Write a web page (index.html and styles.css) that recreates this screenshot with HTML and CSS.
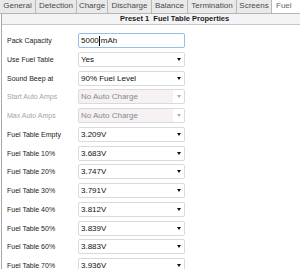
FILE: index.html
```html
<!DOCTYPE html>
<html>
<head>
<meta charset="utf-8">
<link rel="stylesheet" href="styles.css">
</head>
<body>
<div class="tabs">
  <div class="tab t-general">General</div>
  <div class="tab t-detection">Detection</div>
  <div class="tab t-charge">Charge</div>
  <div class="tab t-discharge">Discharge</div>
  <div class="tab t-balance">Balance</div>
  <div class="tab t-termination">Termination</div>
  <div class="tab t-screens">Screens</div>
  <div class="tab t-fuel active">Fuel</div>
</div>
<div class="panel">
  <div class="panel-head"><b>Preset 1</b>&nbsp;&nbsp;<b>Fuel Table Properties</b></div>
  <div class="form">
    <div class="row"><span class="label">Pack Capacity</span><div class="box input focus"><span>5000</span><span class="caret"></span><span>mAh</span></div></div>
    <div class="row"><span class="label">Use Fuel Table</span><div class="box select"><span class="val">Yes</span><span class="arrow"></span></div></div>
    <div class="row"><span class="label">Sound Beep at</span><div class="box select"><span class="val">90% Fuel Level</span><span class="arrow"></span></div></div>
    <div class="row disabled"><span class="label">Start Auto Amps</span><div class="box select"><span class="val">No Auto Charge</span><span class="arrow"></span></div></div>
    <div class="row disabled"><span class="label">Max Auto Amps</span><div class="box select"><span class="val">No Auto Charge</span><span class="arrow"></span></div></div>
    <div class="row"><span class="label">Fuel Table Empty</span><div class="box select"><span class="val">3.209V</span><span class="arrow"></span></div></div>
    <div class="row"><span class="label">Fuel Table 10%</span><div class="box select"><span class="val">3.683V</span><span class="arrow"></span></div></div>
    <div class="row"><span class="label">Fuel Table 20%</span><div class="box select"><span class="val">3.747V</span><span class="arrow"></span></div></div>
    <div class="row"><span class="label">Fuel Table 30%</span><div class="box select"><span class="val">3.791V</span><span class="arrow"></span></div></div>
    <div class="row"><span class="label">Fuel Table 40%</span><div class="box select"><span class="val">3.812V</span><span class="arrow"></span></div></div>
    <div class="row"><span class="label">Fuel Table 50%</span><div class="box select"><span class="val">3.839V</span><span class="arrow"></span></div></div>
    <div class="row"><span class="label">Fuel Table 60%</span><div class="box select"><span class="val">3.883V</span><span class="arrow"></span></div></div>
    <div class="row"><span class="label">Fuel Table 70%</span><div class="box select"><span class="val">3.936V</span><span class="arrow"></span></div></div>
  </div>
</div>
</body>
</html>
```
FILE: styles.css
```css
html, body {
  margin: 0;
  padding: 0;
  background: #ffffff;
  width: 300px;
  height: 269px;
  overflow: hidden;
  font-family: "Liberation Sans", Arial, sans-serif;
}
.tabs {
  display: flex;
  height: 13px;
  border-bottom: 1px solid #b4b4b4;
  background: #ffffff;
}
.tab {
  box-sizing: border-box;
  height: 13px;
  font-size: 8px;
  line-height: 12px;
  color: #4a4a4a;
  text-align: center;
  background: #e9e9e9;
  border-right: 1px solid #b8b8b8;
  flex: none;
  white-space: nowrap;
}
.t-general { width: 36px; }
.t-detection { width: 41px; }
.t-charge { width: 31px; }
.t-discharge { width: 44px; }
.t-balance { width: 36px; }
.t-termination { width: 49px; }
.t-screens { width: 35px; }
.t-fuel {
  width: 28px;
  text-align: left;
  padding-left: 4px;
}
.tab.active {
  background: #ffffff;
  color: #6a6a6a;
  border-right: none;
}
.panel {
  margin-left: 1px;
  border-left: 1px solid #a8a8a8;
  height: 255px;
}
.panel-head {
  height: 10px;
  font-size: 7.5px;
  line-height: 10px;
  color: #1a1a1a;
  background: #f4f4f6;
  border-bottom: 1px solid #c8c8c8;
  padding-left: 118px;
  white-space: nowrap;
}
.form {
  padding-top: 8px;
  padding-left: 5px;
}
.row {
  display: flex;
  align-items: flex-start;
  height: 18.75px;
}
.label {
  width: 71px;
  flex: none;
  font-size: 7px;
  line-height: 15px;
  color: #222222;
  white-space: nowrap;
}
.box {
  box-sizing: border-box;
  width: 107px;
  height: 15px;
  border: 1px solid #dadada;
  border-radius: 2px;
  background: #ffffff;
  font-size: 8px;
  line-height: 13px;
  color: #111111;
  display: flex;
  align-items: center;
  padding-left: 2px;
  position: relative;
}
.box.focus {
  border-color: #93bfe8;
}
.caret {
  width: 1px;
  height: 10px;
  background: #000000;
  margin: 0 1px 0 0;
}
.select .val {
  flex: 1;
}
.arrow {
  width: 0;
  height: 0;
  border-left: 2.5px solid transparent;
  border-right: 2.5px solid transparent;
  border-top: 3px solid #111111;
  margin-right: 3px;
}
.disabled .label {
  color: #a4a4a4;
}
.disabled .box {
  background: linear-gradient(to right, #f5f1f5 0, #f5f1f5 94px, #ffffff 94px);
  color: #8a8a8a;
}
.disabled .arrow {
  border-top-color: #b0b0b0;
}
```
